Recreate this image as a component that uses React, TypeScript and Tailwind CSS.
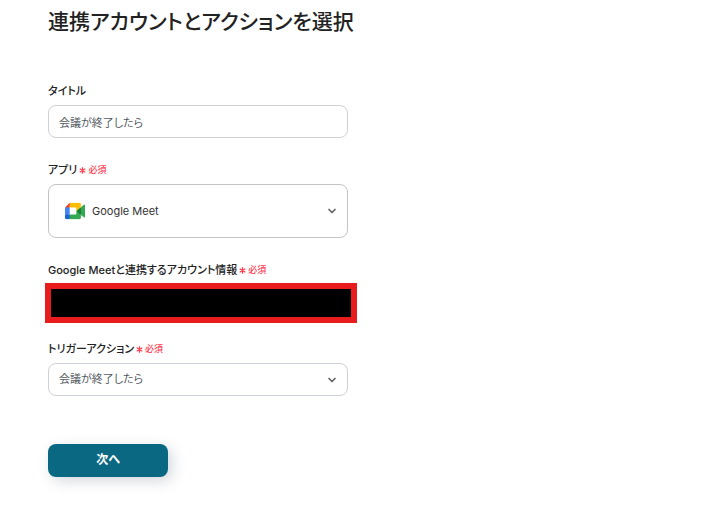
import React, { useState } from 'react';
import { ChevronDown } from 'lucide-react';

const Required: React.FC = () => (
  <span className="ml-[2px] inline-flex items-center gap-[2px] text-[9px] font-medium text-[#ff3b4e]">
    <svg viewBox="0 0 8 8" className="mt-px h-[7px] w-[7px]" fill="none" stroke="currentColor" strokeWidth="1.4">
      <path d="M4 0.3v7.4M0.8 2.1l6.4 3.8M7.2 2.1L0.8 5.9" />
    </svg>
    必須
  </span>
);

const MeetIcon: React.FC = () => (
  <svg viewBox="0 0 87.5 72" className="h-[17px] w-5">
    <path fill="#188038" d="M49.5 36l8.53 9.75 11.47 7.33 2-17.02-2-16.64-11.69 6.44z" />
    <path fill="#1967d2" d="M0 51.5V66c0 3.315 2.685 6 6 6h14.5l3-10.96-3-9.54-9.95-3z" />
    <path fill="#ea4335" d="M20.5 0L0 20.5l10.55 3 9.95-3 2.95-9.41z" />
    <path fill="#4285f4" d="M20.5 20.5H0v31h20.5z" />
    <path
      fill="#34a853"
      d="M82.6 8.68L69.5 19.42v33.66l13.16 10.79c1.97 1.54 4.85.135 4.85-2.37V11c0-2.535-2.945-3.925-4.91-2.32zM49.5 36v15.5h-29V72h43c3.315 0 6-2.685 6-6V53.08z"
    />
    <path fill="#fbbc04" d="M63.5 0h-43v20.5h29V36l20-16.57V6c0-3.315-2.685-6-6-6z" />
  </svg>
);

const Chevron: React.FC = () => (
  <ChevronDown className="pointer-events-none absolute top-1/2 right-[10px] -translate-y-1/2 text-[#666]" size={12} strokeWidth={3.5} />
);

const labelClass = 'flex items-center text-[11px] leading-[14px] font-medium text-[#222]';

const App: React.FC = () => {
  const [title, setTitle] = useState('会議が終了したら');
  const [app, setApp] = useState('Google Meet');
  const [trigger, setTrigger] = useState('会議が終了したら');

  return (
    <main className="bg-white px-12 pt-[6px] pb-10 font-[Inter,'Noto_Sans_CJK_JP',sans-serif] text-[#222] [font-feature-settings:'palt']">
      <h1 className="text-[21px] leading-8 font-medium">連携アカウントとアクションを選択</h1>

      <form className="mt-[46px] max-w-[300px]" onSubmit={(e) => e.preventDefault()}>
        <div>
          <label htmlFor="title" className={labelClass}>タイトル</label>
          <input
            id="title"
            type="text"
            value={title}
            onChange={(e) => setTitle(e.target.value)}
            className="mt-[7px] block h-[33px] w-full rounded-lg border border-[#cdd0d8] px-[10px] text-[11px] text-[#555b63]"
          />
        </div>

        <div className="mt-[25px]">
          <label htmlFor="app" className={labelClass}>
            アプリ
            <Required />
          </label>
          <div className="relative mt-[7px]">
            <div className="pointer-events-none absolute top-1/2 left-[17px] -translate-y-1/2">
              <MeetIcon />
            </div>
            <select
              id="app"
              value={app}
              onChange={(e) => setApp(e.target.value)}
              className="block h-[54px] w-full appearance-none rounded-lg border border-[#c4c4c4] bg-transparent pr-8 pl-[43px] text-[11px] text-[#333]"
            >
              <option value="Google Meet">Google Meet</option>
            </select>
            <Chevron />
          </div>
        </div>

        <div className="mt-[25px]">
          <div className={labelClass}>
            Google Meetと連携するアカウント情報
            <Required />
          </div>
          <div className="-mr-[9px] -ml-[3px] mt-[6px] h-10 border-[6px] border-[#e81c1c] bg-black" />
        </div>

        <div className="mt-[19px]">
          <label htmlFor="trigger" className={labelClass}>
            トリガーアクション
            <Required />
          </label>
          <div className="relative mt-[7px]">
            <select
              id="trigger"
              value={trigger}
              onChange={(e) => setTrigger(e.target.value)}
              className="block h-[33px] w-full appearance-none rounded-lg border border-[#cdd0d8] bg-transparent pr-8 pl-[10px] text-[11px] text-[#555b63]"
            >
              <option value="会議が終了したら">会議が終了したら</option>
            </select>
            <Chevron />
          </div>
        </div>

        <button
          type="submit"
          className="mt-12 block h-[33px] w-[120px] rounded-lg bg-[#0b6882] pb-px text-xs font-bold text-white shadow-[4px_4px_14px_rgba(40,60,90,0.2)]"
        >
          次へ
        </button>
      </form>
    </main>
  );
};

export default App;
